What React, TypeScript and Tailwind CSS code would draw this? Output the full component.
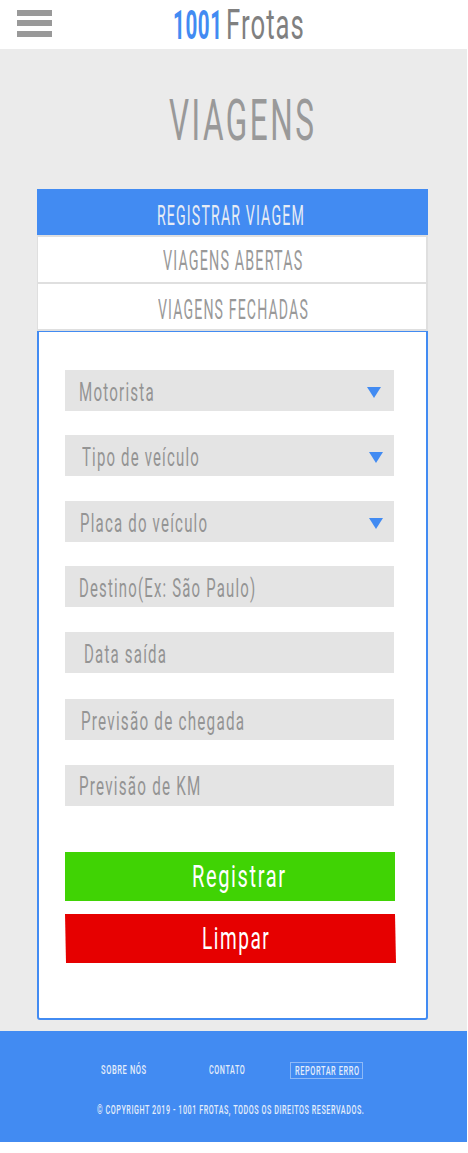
import { useLayoutEffect, useRef, useState } from "react";
import clsx from "clsx";

type CondensedProps = { text: string; width: number; className?: string; tracking?: string };

/** Single line of text condensed horizontally to the given width. */
function Condensed({ text, width, className, tracking = "tracking-[0.08em]" }: CondensedProps) {
  const ref = useRef<HTMLSpanElement>(null);
  const [scale, setScale] = useState(0.6);

  useLayoutEffect(() => {
    const el = ref.current;
    if (!el) return;
    const spacing = parseFloat(getComputedStyle(el).letterSpacing) || 0;
    setScale(width / (el.offsetWidth - spacing));
  }, [text, width]);

  return (
    <span className={clsx("block shrink-0 whitespace-nowrap leading-none", className)} style={{ width }}>
      <span
        ref={ref}
        className={clsx("inline-block origin-left", tracking)}
        style={{ transform: `scaleX(${scale})` }}
      >
        {text}
      </span>
    </span>
  );
}

const tabs = [
  {
    text: "REGISTRAR VIAGEM",
    width: 147,
    box: "h-[46px] bg-[#428bf2] pl-[120px] pt-[9px] text-[#e6ecf5]",
  },
  {
    text: "VIAGENS ABERTAS",
    width: 139,
    box: "h-[47px] border-t-2 border-r-2 border-l border-[#dfdfdf] bg-white pl-[125px] pt-[3px] text-[#999]",
  },
  {
    text: "VIAGENS FECHADAS",
    width: 150,
    box: "h-[49px] border-y-2 border-r-2 border-l border-[#dfdfdf] bg-white pl-[120px] pt-[8px] text-[#999]",
  },
];

const fields = [
  { text: "Motorista", width: 75, box: "pl-[14px] pt-[3px]", arrow: "mr-[13px]" },
  { text: "Tipo de veículo", width: 117, box: "mt-6 pl-[17px] pt-[3px]", arrow: "mr-[11px]" },
  { text: "Placa do veículo", width: 127, box: "mt-[25px] pl-[15px] pt-[3px]", arrow: "mr-[11px]" },
  { text: "Destino(Ex: São Paulo)", width: 176, box: "mt-6 pl-[14px] pt-[3px]" },
  { text: "Data saída", width: 82, box: "mt-[25px] pl-[19px] pt-[3px]" },
  { text: "Previsão de chegada", width: 163, box: "mt-[26px] pl-[16px] pt-[3px]" },
  { text: "Previsão de KM", width: 121, box: "mt-[25px] pl-[14px] pt-px" },
];

export default function App() {
  return (
    <div className="h-[1153px] w-[468px] overflow-hidden bg-white font-['Roboto',sans-serif]">
      <div className="w-[467px]">
        <header className="flex h-[49px] items-start">
          <button aria-label="Menu" className="ml-[17px] mt-[10px] flex w-[35px] flex-col">
            <span className="h-[6px] bg-[#999]" />
            <span className="mt-1 h-[6px] bg-[#999]" />
            <span className="mt-[5px] h-[6px] bg-[#999]" />
          </button>
          <Condensed
            text="1001"
            width={49}
            tracking="tracking-[0.03em]"
            className="ml-[121px] mt-[5px] text-[41px] font-bold text-[#428bf2]"
          />
          <Condensed
            text="Frotas"
            width={78}
            tracking="tracking-[0.04em]"
            className="ml-[4px] mt-[4px] text-[42px] font-normal text-[#808080]"
          />
        </header>

        <main className="h-[982px] bg-[#ebebeb] px-[37px] pt-[43px]">
          <h1 className="flex h-[97px] pl-[132px]">
            <Condensed text="VIAGENS" width={145} className="text-[57px] font-normal text-[#999]" />
          </h1>

          <div className="w-[391px]">
            <nav>
              {tabs.map((t) => (
                <div key={t.text} className={clsx("flex items-center", t.box)}>
                  <Condensed text={t.text} width={t.width} className="text-[27px]" />
                </div>
              ))}
            </nav>

            <form className="h-[689px] rounded-b-[3px] border-x-2 border-b-2 border-t border-[#428bf2] bg-white pl-[26px] pt-[38px]">
              {fields.map((f) => (
                <div
                  key={f.text}
                  className={clsx("flex h-[41px] w-[329px] items-center bg-[#e4e4e4] text-[#949494]", f.box)}
                >
                  <Condensed text={f.text} width={f.width} className="text-[26px]" />
                  {f.arrow && (
                    <svg className={clsx("ml-auto h-[11px] w-[14px]", f.arrow)} viewBox="0 0 14 11">
                      <path d="M0 0H14L7 11Z" fill="#428bf2" />
                    </svg>
                  )}
                </div>
              ))}

              <div className="mt-[46px] flex h-[49px] w-[330px] items-center bg-[#40d304] pb-[2px] pl-[127px] text-white">
                <Condensed text="Registrar" width={93} className="text-[32px]" />
              </div>
              <div className="mt-[13px] flex h-[49px] w-[331px] items-center bg-[#e60000] pb-[2px] pl-[137px] text-white [clip-path:polygon(0_0,330px_0,331px_100%,1px_100%)]">
                <Condensed text="Limpar" width={67} className="text-[32px]" />
              </div>
            </form>
          </div>
        </main>

        <footer className="h-[111px] bg-[#428bf2] pt-[31px] text-[13px] font-medium text-[#e4edfa]">
          <div className="flex h-[17px] pl-[101px]">
            <Condensed text="SOBRE NÓS" width={45} className="mt-px" />
            <Condensed text="CONTATO" width={36} className="ml-[63px] mt-px" />
            <div className="ml-[45px] flex h-[17px] w-[73px] items-center border border-[#8db9f7] pl-1">
              <Condensed text="REPORTAR ERRO" width={64} />
            </div>
          </div>
          <div className="mt-[24px] pl-[97px]">
            <Condensed text="© COPYRIGHT 2019 - 1001 FROTAS, TODOS OS DIREITOS RESERVADOS." width={267} />
          </div>
        </footer>
      </div>
    </div>
  );
}
